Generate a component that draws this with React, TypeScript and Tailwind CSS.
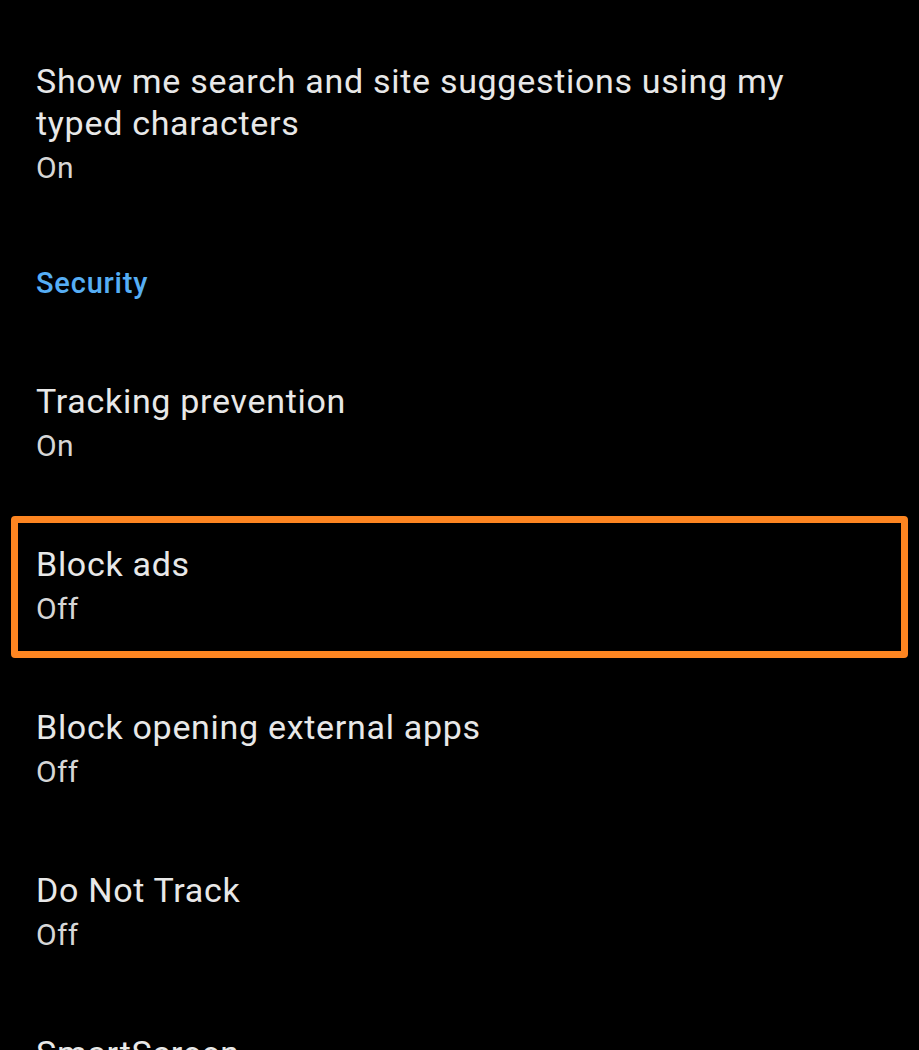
import React from "react";

type Item = { title: string; value: string; highlight?: boolean };

const Row = ({ title, value, highlight }: Item) => (
  <div className="relative pl-[36px] pr-[72px] pt-[39px] pb-[42px]">
    <div className="text-[34px] leading-[42px] tracking-[0.7px] text-[#e8e8e8]">{title}</div>
    <div className="mt-[8px] text-[30px] leading-[32px] tracking-[0.3px] text-[#d6d6d6]">{value}</div>
    {highlight && (
      <div className="pointer-events-none absolute left-[11px] right-[11px] top-[12px] bottom-[9px] rounded-[4px] border-[7px] border-[#fd8521]" />
    )}
  </div>
);

export default function App() {
  return (
    <div
      className="w-full overflow-hidden bg-black"
      style={{ fontFamily: "Roboto, 'Noto Sans', sans-serif", height: 1050 }}
    >
      <div className="pt-[21px]">
        <Row title="Show me search and site suggestions using my typed characters" value="On" />
        <div className="px-[36px] pt-[41px] pb-[42px]">
          <div className="text-[29px] font-medium leading-[32px] tracking-[0.8px] text-[#56aef5]">Security</div>
        </div>
        <Row title="Tracking prevention" value="On" />
        <Row title="Block ads" value="Off" highlight />
        <Row title="Block opening external apps" value="Off" />
        <Row title="Do Not Track" value="Off" />
        <Row title="SmartScreen" value="On" />
      </div>
    </div>
  );
}
